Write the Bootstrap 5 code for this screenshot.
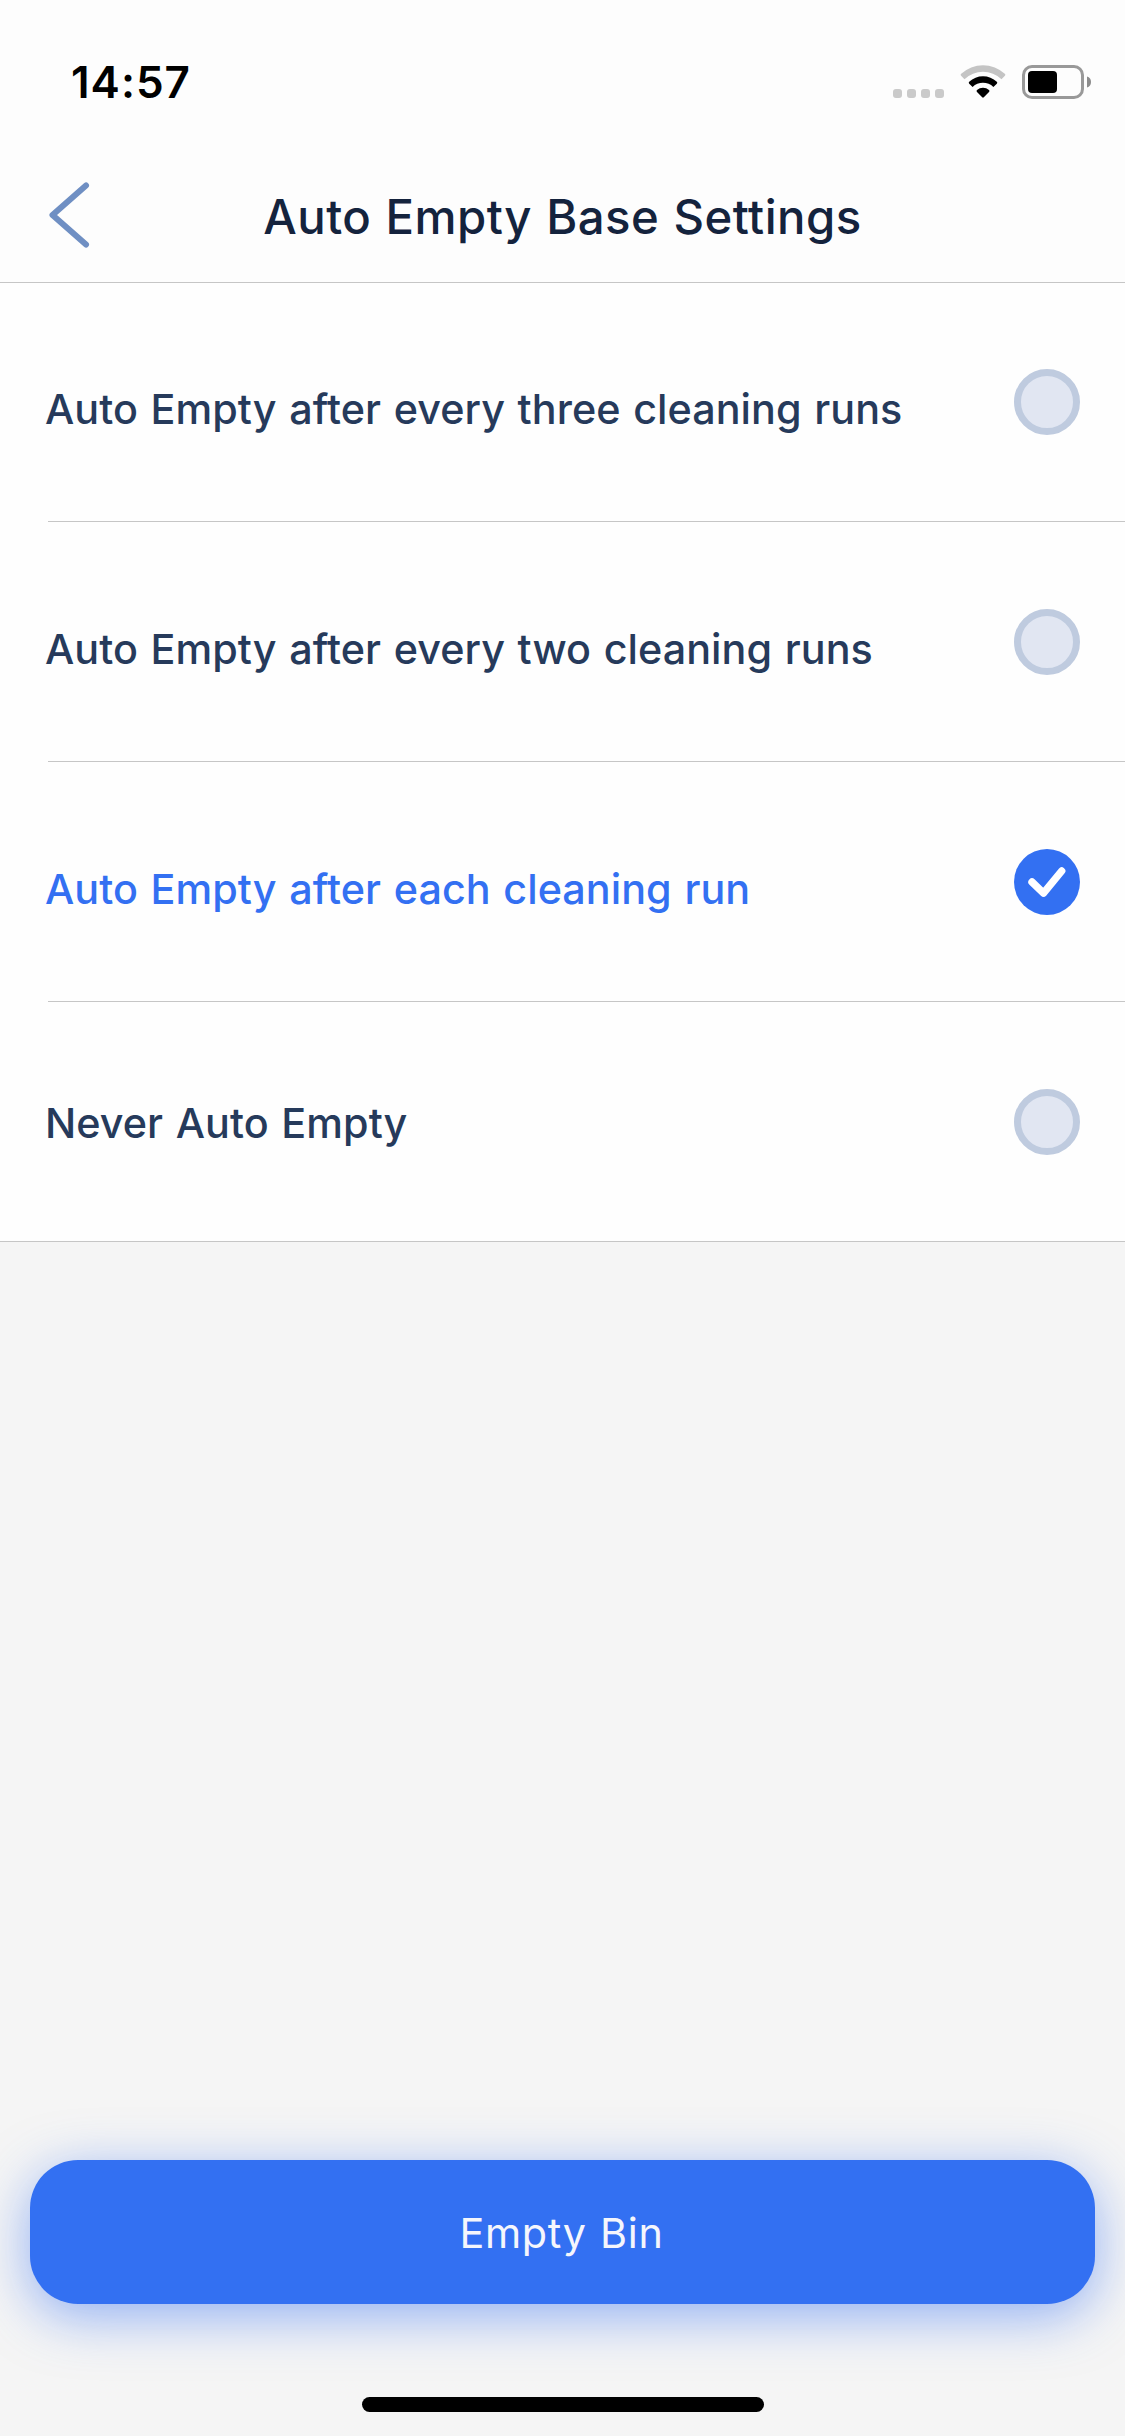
<!DOCTYPE html>
<html lang="en">
<head>
<meta charset="utf-8">
<meta name="viewport" content="width=device-width, initial-scale=1">
<title>Auto Empty Base Settings</title>
<link href="https://cdn.jsdelivr.net/npm/bootstrap@5.3.0/dist/css/bootstrap.min.css" rel="stylesheet">
<style>
body{font-family:Inter,"Liberation Sans",sans-serif;background:#f5f5f5;height:2436px;overflow:hidden}
.app-head{background:#fdfdfd;height:283px;border-bottom:1px solid #c6c6c6}
.status-row{height:164px;padding:0 33px 0 71px}
.clock{font-size:44px;font-weight:600;line-height:164px;letter-spacing:1px}
.title-row{height:106px;padding:0 48px}
.side{width:48px}
.back-icon{margin-bottom:4px}
.page-title{font-size:47.3px;font-weight:450;line-height:106px;color:#14233d;white-space:nowrap;letter-spacing:.5px;word-spacing:1px}
.opts{background:#fefefe;border-bottom:1px solid #c6c6c6}
.opt{margin-left:48px;height:240px;padding-right:45px;border-bottom:1px solid #c6c6c6;cursor:pointer}
.opt:first-child{height:239px}
.opt:last-child{border-bottom:0;height:239px}
.opt-text{font-size:41.3px;font-weight:450;line-height:50px;color:#263a5b;white-space:nowrap;padding-top:14px;margin-left:-3px;letter-spacing:.05px;word-spacing:1.6px}
.opt:last-child .opt-text{padding-top:2px}
.opt.active-opt .opt-text{color:#3370f2}
.ring{width:66px;height:66px;flex:none}
.bottom{padding:0 30px 24px}
.btn-empty{height:144px;border-radius:48px;border:0;background:#3370f2;color:#f5f6fc;font-size:41.3px;padding-top:9px;padding-right:14px;box-shadow:0 12px 54px rgba(51,112,242,.52);letter-spacing:.7px;word-spacing:1px}
.btn-empty:hover{background:#3370f2;color:#f5f6fc}
.home-bar{width:402px;height:15px;border-radius:8px;background:#000;margin-top:93px}
</style>
</head>
<body class="d-flex flex-column">
<header class="app-head">
  <div class="status-row d-flex justify-content-between align-items-center text-black">
    <span class="clock">14:57</span>
    <svg width="202" height="36" viewBox="890 64 202 36" aria-hidden="true">
      <g fill="#cacaca"><rect x="893" y="89" width="9" height="9" rx="3"/><rect x="907" y="89" width="9" height="9" rx="3"/><rect x="921" y="89" width="9" height="9" rx="3"/><rect x="935" y="89" width="9" height="9" rx="3"/></g>
      <path d="M961.2 73.8a32 32 0 0 1 43.6 0q1 1 .1 2l-3.4 3.4a27 27 0 0 0-37 0l-3.4-3.4q-.9-1 .1-2z" fill="#c4c4c4"/>
      <path d="M969.2 81.8a20 20 0 0 1 27.6 0q1 1 0 2l-3.4 3.2a15 15 0 0 0-20.8 0l-3.4-3.2q-1-1 0-2z"/>
      <path d="M977 90a9 9 0 0 1 12 0q1 1 0 2l-5.2 5.3q-.8.8-1.6 0L977 92q-1-1 0-2z"/>
      <rect x="1023.5" y="66.5" width="59" height="31" rx="8.5" fill="none" stroke="#999" stroke-width="3"/>
      <rect x="1028" y="71" width="29" height="22" rx="4"/>
      <path d="M1087 76.5q4 1.3 4 5.5t-4 5.5z" fill="#8c8c8c"/>
    </svg>
  </div>
  <div class="title-row d-flex justify-content-between align-items-center">
    <svg class="side back-icon" height="68" viewBox="48 181 48 68" fill="none" stroke="#6f8fc3" stroke-width="6" stroke-linecap="round" stroke-linejoin="round" aria-label="Back"><path d="M86 185.5 52.5 215 86 244.5"/></svg>
    <h1 class="page-title m-0">Auto Empty Base Settings</h1>
    <span class="side"></span>
  </div>
</header>
<main class="opts">
  <div class="opt d-flex justify-content-between align-items-center">
    <span class="opt-text">Auto Empty after every three cleaning runs</span>
    <svg class="ring" viewBox="0 0 66 66"><circle cx="33" cy="33" r="29.5" fill="#e1e6f2" stroke="#bfcbdf" stroke-width="7"/></svg>
  </div>
  <div class="opt d-flex justify-content-between align-items-center">
    <span class="opt-text">Auto Empty after every two cleaning runs</span>
    <svg class="ring" viewBox="0 0 66 66"><circle cx="33" cy="33" r="29.5" fill="#e1e6f2" stroke="#bfcbdf" stroke-width="7"/></svg>
  </div>
  <div class="opt active-opt d-flex justify-content-between align-items-center">
    <span class="opt-text">Auto Empty after each cleaning run</span>
    <svg class="ring" viewBox="0 0 66 66"><circle cx="33" cy="33" r="33" fill="#3370f2"/><path d="M18 33 29.5 44.2 47.7 22" fill="none" stroke="#fff" stroke-width="7.4" stroke-linecap="round" stroke-linejoin="round"/></svg>
  </div>
  <div class="opt d-flex justify-content-between align-items-center">
    <span class="opt-text">Never Auto Empty</span>
    <svg class="ring" viewBox="0 0 66 66"><circle cx="33" cy="33" r="29.5" fill="#e1e6f2" stroke="#bfcbdf" stroke-width="7"/></svg>
  </div>
</main>
<footer class="bottom mt-auto d-flex flex-column align-items-center">
  <button type="button" class="btn btn-empty w-100">Empty Bin</button>
  <div class="home-bar"></div>
</footer>
<script src="https://cdn.jsdelivr.net/npm/bootstrap@5.3.0/dist/js/bootstrap.bundle.min.js"></script>
</body>
</html>
